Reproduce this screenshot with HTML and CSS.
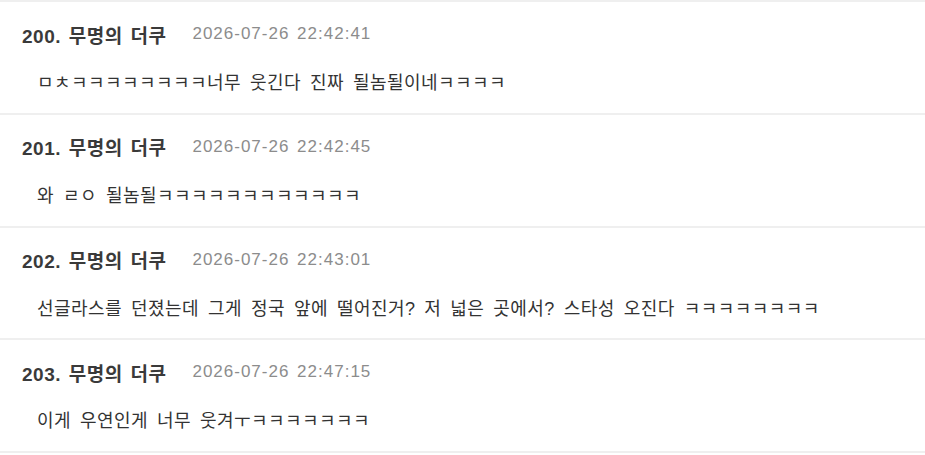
FILE: index.html
```html
<!DOCTYPE html>
<html lang="ko">
<head>
    <meta charset="UTF-8">
    <meta name="viewport" content="width=device-width, initial-scale=1.0">
    <title>댓글</title>
    <link rel="stylesheet" href="styles.css">
</head>
<body>
    <ul class="comments">
        <li class="comment">
            <div class="comment-head">
                <span class="comment-name">200. 무명의 더쿠</span>
                <span class="comment-date">2026-07-26 22:42:41</span>
            </div>
            <p class="comment-text">ㅁㅊㅋㅋㅋㅋㅋㅋㅋㅋ너무 웃긴다 진짜 될놈될이네ㅋㅋㅋㅋ</p>
        </li>
        <li class="comment">
            <div class="comment-head">
                <span class="comment-name">201. 무명의 더쿠</span>
                <span class="comment-date">2026-07-26 22:42:45</span>
            </div>
            <p class="comment-text">와 ㄹㅇ 될놈될ㅋㅋㅋㅋㅋㅋㅋㅋㅋㅋㅋㅋ</p>
        </li>
        <li class="comment">
            <div class="comment-head">
                <span class="comment-name">202. 무명의 더쿠</span>
                <span class="comment-date">2026-07-26 22:43:01</span>
            </div>
            <p class="comment-text">선글라스를 던졌는데 그게 정국 앞에 떨어진거? 저 넓은 곳에서? 스타성 오진다 ㅋㅋㅋㅋㅋㅋㅋㅋ</p>
        </li>
        <li class="comment">
            <div class="comment-head">
                <span class="comment-name">203. 무명의 더쿠</span>
                <span class="comment-date">2026-07-26 22:47:15</span>
            </div>
            <p class="comment-text">이게 우연인게 너무 웃겨ㅜㅋㅋㅋㅋㅋㅋㅋ</p>
        </li>
    </ul>
</body>
</html>
```

FILE: styles.css
```css
body {
    margin: 0;
    background-color: #fff;
    color: #333;
    font-family: "Liberation Sans", "Noto Sans CJK KR", sans-serif;
}
.comments {
    list-style: none;
    margin: 0;
    padding: 0;
}
.comment {
    border-top: 2px solid #efefef;
    padding: 20px 22px 17.75px;
}
.comment:last-child {
    border-bottom: 2px solid #efefef;
}
.comment-head {
    display: flex;
    align-items: center;
    gap: 26px;
    height: 24px;
}
.comment-name {
    font-size: 19px;
    font-weight: 700;
    letter-spacing: 0.5px;
    word-spacing: 2px;
    color: #3a3a3a;
}
.comment-date {
    font-size: 17px;
    letter-spacing: 1px;
    word-spacing: 2px;
    color: #8c8c8c;
}
.comment-text {
    margin: 25px 0 0;
    padding-left: 15px;
    font-size: 18px;
    line-height: 24px;
    letter-spacing: 0.45px;
    word-spacing: 3.5px;
    color: #333;
}
```
